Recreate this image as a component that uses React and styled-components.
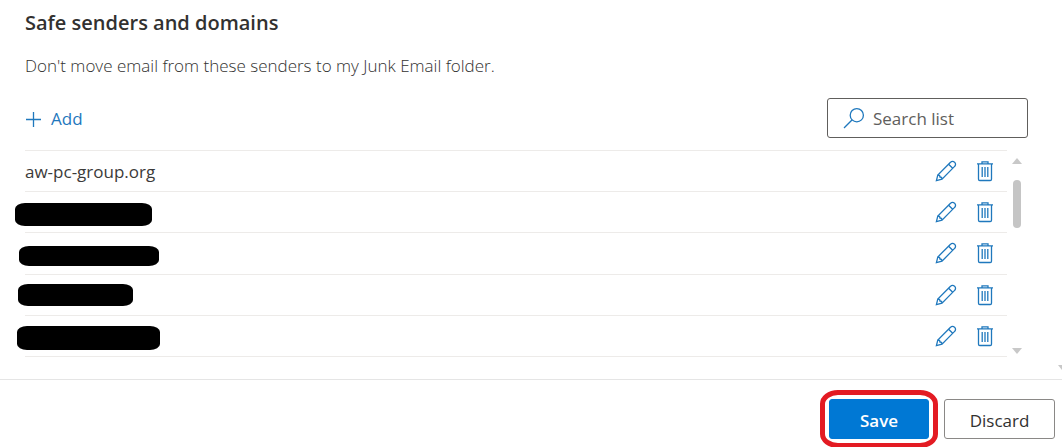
import React, { useState } from 'react'
import styled, { createGlobalStyle } from 'styled-components'

const senders = [
  { id: 1, name: "aw-pc-group.org" },
  { id: 2, mark: { left: -10, top: 11, width: 137, height: 23 } },
  { id: 3, mark: { left: -6, top: 13, width: 140, height: 20 } },
  { id: 4, mark: { left: -7, top: 9, width: 115, height: 22 } },
  { id: 5, mark: { left: -8, top: 10, width: 143, height: 24 } },
]

const PlusIcon = () => (
  <Icon width="16" height="16" viewBox="0 0 16 16">
    <path d="M8.5 1v15M1 8.5h15" />
  </Icon>
)

const SearchIcon = () => (
  <Icon width="22" height="22" viewBox="0 0 22 22">
    <circle cx="13.8" cy="8.2" r="6.6" />
    <path d="M9.2 12.8L1 21" />
  </Icon>
)

const PencilIcon = () => (
  <Icon width="22" height="22" viewBox="0 0 22 22">
    <path d="M1.4 20.6l1.4-5.6L15.5 2.3a2.7 2.7 0 0 1 4.1 0a2.7 2.7 0 0 1 0 4.1L7 19.1z" />
    <path d="M2.8 15c1.7 0 2.2.6 2.2 2c1.4 0 2 .7 2 2.1M13.6 4.2l4.1 4.1" />
  </Icon>
)

const TrashIcon = () => (
  <Icon width="18" height="22" viewBox="0 0 18 22">
    <path d="M1 3.8h16M6 3.8v-2h6v2M2.5 3.8v15.4q0 1.3 1.3 1.3h10.4q1.3 0 1.3-1.3V3.8" />
    <path d="M6.2 7v10M9 7v10M11.8 7v10" />
  </Icon>
)

export default function App() {
  const [search, setSearch] = useState("")

  return (
    <Page>
      <GlobalStyle />
      <Content>
        <Title>Safe senders and domains</Title>
        <Description>Don't move email from these senders to my Junk Email folder.</Description>
        <Toolbar>
          <AddButton type="button"><PlusIcon />Add</AddButton>
          <SearchBox>
            <SearchIcon />
            <SearchInput
              type="text"
              aria-label="Search list"
              placeholder="Search list"
              value={search}
              onChange={(e) => setSearch(e.target.value)}
            />
          </SearchBox>
        </Toolbar>
        <ListArea>
          <List>
            {senders.map((sender) => (
              <Row key={sender.id}>
                <Sender>{sender.name}</Sender>
                {sender.mark && <Redaction $mark={sender.mark} />}
                <IconButton type="button" aria-label="Edit"><PencilIcon /></IconButton>
                <IconButton type="button" aria-label="Delete"><TrashIcon /></IconButton>
              </Row>
            ))}
          </List>
          <ScrollBar>
            <Arrow width="10" height="6" viewBox="0 0 10 6"><path d="M0 6l5-6l5 6z" /></Arrow>
            <Thumb />
            <Arrow width="10" height="6" viewBox="0 0 10 6"><path d="M0 0l5 6l5-6z" /></Arrow>
          </ScrollBar>
        </ListArea>
        <PageArrow width="4" height="6" viewBox="0 0 4 6"><path d="M0 0h4v5z" /></PageArrow>
      </Content>
      <Footer>
        <Highlight>
          <Button type="button" $primary>Save</Button>
        </Highlight>
        <Button type="button">Discard</Button>
      </Footer>
    </Page>
  )
}

const GlobalStyle = createGlobalStyle`
  * {
    box-sizing: border-box;
  }

  body {
    margin: 0;
    background-color: #ffffff;
    color: #3b3a39;
    font-family: "Segoe UI", "Open Sans", "Noto Sans", sans-serif;
    font-size: 17px;
  }

  button, input {
    font: inherit;
  }
`;

const Page = styled.div`
  overflow: hidden;
`;

const Content = styled.main`
  position: relative;
  padding: 9px 34px 22px 25px;
`;

const Title = styled.h1`
  margin: 0;
  color: #323130;
  font-size: 20px;
  font-weight: 600;
  line-height: 28px;
`;

const Description = styled.p`
  margin: 17px 0 20px;
  color: #323130;
  font-weight: 300;
  line-height: 24px;
`;

const Toolbar = styled.div`
  display: flex;
  align-items: center;
  justify-content: space-between;
  margin-bottom: 12px;
`;

const Icon = styled.svg`
  display: block;
  flex: none;
  fill: none;
  stroke: #1f78bd;
  stroke-width: 1.3;
`;

const AddButton = styled.button`
  display: flex;
  align-items: center;
  gap: 10px;
  padding: 2px 0 0;
  border: none;
  background: none;
  color: #1f78bd;
  line-height: 24px;
  cursor: pointer;
`;

const SearchBox = styled.label`
  display: flex;
  align-items: center;
  gap: 8px;
  width: 201px;
  height: 40px;
  padding: 0 15px;
  border: 1px solid #605e5c;
  border-radius: 3px;
`;

const SearchInput = styled.input`
  flex: 1;
  min-width: 0;
  padding: 0;
  border: none;
  outline: none;
  background: none;
  color: #323130;

  &::placeholder {
    color: #605e5c;
    opacity: 1;
  }
`;

const ListArea = styled.div`
  display: flex;
  gap: 5px;
  padding-right: 6px;
`;

const List = styled.ul`
  flex: 1;
  display: grid;
  grid-auto-rows: 1fr;
  height: 207px;
  margin: 0;
  padding: 0;
  border-top: 1px solid #edebe9;
  list-style: none;
`;

const Row = styled.li`
  position: relative;
  display: flex;
  align-items: center;
  padding-right: 13px;
  border-bottom: 1px solid #edebe9;
`;

const Sender = styled.span`
  flex: 1;
  padding-top: 2px;
  line-height: 24px;
`;

/* blacked out address, lies over the row and its borders */
const Redaction = styled.span`
  position: absolute;
  left: ${(props) => props.$mark.left}px;
  top: ${(props) => props.$mark.top}px;
  width: ${(props) => props.$mark.width}px;
  height: ${(props) => props.$mark.height}px;
  border-radius: 10px / 6px;
  background-color: #000000;
`;

const IconButton = styled.button`
  padding: 0;
  border: none;
  background: none;
  cursor: pointer;

  & + & {
    margin-left: 19px;
  }
`;

const ScrollBar = styled.div`
  display: flex;
  flex-direction: column;
  align-items: center;
  width: 10px;
  padding: 8px 0 3px;
`;

const Arrow = styled.svg`
  display: block;
  flex: none;
  fill: #c8c8c8;

  &:last-child {
    margin-top: auto;
  }
`;

const Thumb = styled.div`
  width: 8px;
  height: 48px;
  margin-top: 16px;
  border-radius: 4px;
  background-color: #c5c5c5;
`;

const PageArrow = styled.svg`
  position: absolute;
  right: 0;
  bottom: 8px;
  fill: #c8c8c8;
`;

const Footer = styled.footer`
  display: flex;
  justify-content: flex-end;
  gap: 15px;
  padding: 19px 7px 8px;
  border-top: 1px solid #e5e5e5;
`;

const Highlight = styled.div`
  position: relative;

  &::after {
    content: "";
    position: absolute;
    inset: -9px;
    border: 5px solid #e31b23;
    border-radius: 18px / 14px;
    pointer-events: none;
  }
`;

const Button = styled.button`
  min-width: ${(props) => (props.$primary ? "100px" : "111px")};
  height: 40px;
  padding: 2px 16px 0;
  border: 1px solid ${(props) => (props.$primary ? "#0078d4" : "#8a8886")};
  border-radius: 3px;
  background-color: ${(props) => (props.$primary ? "#0078d4" : "#ffffff")};
  color: ${(props) => (props.$primary ? "#ffffff" : "#323130")};
  font-weight: ${(props) => (props.$primary ? 600 : 500)};
  cursor: pointer;
`;
